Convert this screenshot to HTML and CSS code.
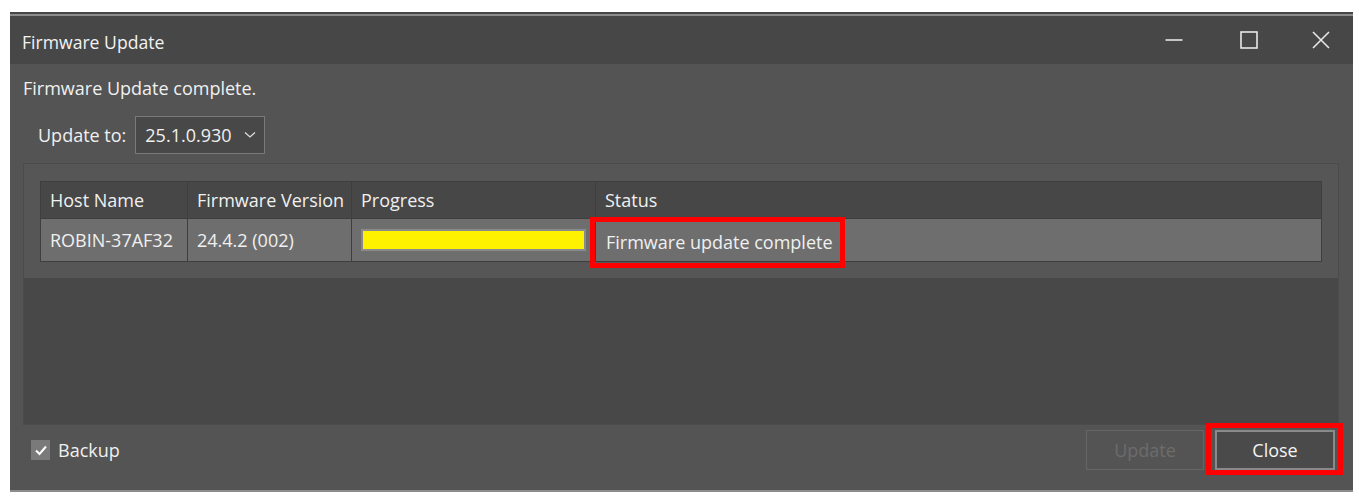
FILE: index.html
```html
<!DOCTYPE html>
<html>
<head>
<meta charset="utf-8">
<title>Firmware Update</title>
<link rel="stylesheet" href="styles.css">
</head>
<body>
<div class="window">
  <div class="behind"></div>
  <div class="edge"></div>
  <div class="titlebar">
    <span class="title">Firmware Update</span>
    <div class="caption">
      <span class="cbtn min"><svg width="18" height="18" viewBox="0 0 18 18"><path d="M0.5 9H17.5" stroke="#e8e8e8" stroke-width="1.6"/></svg></span>
      <span class="cbtn"><svg width="18" height="18" viewBox="0 0 18 18"><rect x="1" y="1" width="16" height="16" fill="none" stroke="#e8e8e8" stroke-width="1.6"/></svg></span>
      <span class="cbtn close"><svg width="18" height="18" viewBox="0 0 18 18"><path d="M1 1L17 17M17 1L1 17" stroke="#e8e8e8" stroke-width="1.6"/></svg></span>
    </div>
  </div>
  <div class="content">
    <div class="msg">Firmware Update complete.</div>
    <div class="update-row">
      <span class="label">Update to:</span>
      <div class="select"><span>25.1.0.930</span><svg width="12" height="8" viewBox="0 0 12 8"><path d="M1 1.5L6 6L11 1.5" fill="none" stroke="#dcdcdc" stroke-width="1.3"/></svg></div>
    </div>
    <div class="panel">
      <div class="panel-top">
        <div class="grid">
          <div class="row head">
            <div class="cell c1">Host Name</div>
            <div class="cell c2">Firmware Version</div>
            <div class="cell c3">Progress</div>
            <div class="cell c4">Status</div>
          </div>
          <div class="row data">
            <div class="cell c1">ROBIN-37AF32</div>
            <div class="cell c2">24.4.2 (002)</div>
            <div class="cell c3"><div class="bar"><div class="fill" style="width:100%"></div></div></div>
            <div class="cell c4"><span class="status">Firmware update complete</span></div>
          </div>
        </div>
      </div>
      <div class="panel-bottom"></div>
    </div>
    <div class="footer">
      <label class="check"><span class="box"><svg width="14" height="12" viewBox="0 0 14 12"><path d="M2 6.5L5.5 10L12 2.5" fill="none" stroke="#fff" stroke-width="2"/></svg></span>Backup</label>
      <div class="buttons">
        <button class="btn disabled">Update</button>
        <span class="hl"><button class="btn primary">Close</button></span>
      </div>
    </div>
  </div>
  <div class="bottom-edge"></div>
</div>
</body>
</html>
```
FILE: styles.css
```css
* { box-sizing: border-box; }
html, body { margin: 0; padding: 0; background: #ffffff; }
body {
  font-family: "Open Sans", "Noto Sans", sans-serif;
  font-size: 18px;
  color: #f0f0f0;
  width: 1359px;
  height: 504px;
  overflow: hidden;
}
.window {
  margin: 12px 0 0 10px;
  width: 1343px;
}
.behind { height: 2px; background: #464646; }
.edge { height: 2px; background: #8c8c8c; }
.titlebar {
  height: 48px;
  background: #474747;
  display: flex;
  align-items: center;
  padding-left: 12px;
}
.title { font-size: 17.6px; color: #f2f2f2; padding-top: 3px; }
.caption { margin-left: auto; display: flex; height: 100%; }
.cbtn { width: 72px; display: flex; align-items: center; justify-content: center; }
.cbtn.min { padding-right: 6px; }
.cbtn.close { width: 68px; padding-left: 4px; }
.content {
  background: #545454;
  height: 426px;
  padding: 0 14px 0 13px;
  display: flex;
  flex-direction: column;
}
.msg { height: 48px; padding-top: 12px; line-height: 24px; }
.update-row { display: flex; align-items: center; height: 46px; padding-left: 15px; }
.label { margin-right: 9px; }
.select {
  width: 130px;
  height: 38px;
  border: 1px solid #7a7a7a;
  background: #484848;
  display: flex;
  align-items: center;
  padding: 0 8px 0 9px;
}
.select svg { margin-left: auto; }
.panel {
  margin-top: 5px;
  height: 262px;
  flex: none;
  display: flex;
  flex-direction: column;
  border: 1px solid #4b4b4b;
}
.panel-top { height: 114px; background: #565656; padding: 17px 16px 0 16px; }
.panel-bottom { flex: 1; background: #484848; }
.grid { border: 1px solid #3e3e3e; }
.row { display: flex; }
.row.head { height: 37px; background: #474747; border-bottom: 1px solid #3e3e3e; }
.row.data { height: 42px; background: #6e6e6e; }
.cell {
  display: flex;
  align-items: center;
  padding-left: 9px;
  border-right: 1px solid #3e3e3e;
  white-space: nowrap;
}
.cell.c4 { border-right: none; flex: 1; }
.c1 { width: 147px; }
.c2 { width: 164px; }
.c3 { width: 244px; }
.bar {
  width: 225px;
  height: 22px;
  background: #8a8a8a;
  padding: 2px;
}
.fill { height: 100%; background: #fff200; }
.data .c4 { padding-left: 0; align-items: flex-start; }
.status {
  margin-left: -6px;
  margin-top: -2px;
  height: 51px;
  display: flex;
  align-items: center;
  padding: 0 7px 2px 11px;
  border: 5px solid #ff0000;
}
.footer {
  flex: 1;
  display: flex;
  align-items: flex-start;
  padding-left: 8px;
  padding-top: 5px;
}
.check { display: flex; align-items: center; height: 40px; }
.box {
  width: 19px; height: 20px;
  background: #7a7a7a;
  display: flex; align-items: center; justify-content: center;
  margin-right: 8px;
}
.buttons { margin-left: auto; display: flex; align-items: flex-start; margin-right: -4px; }
.btn {
  width: 118px;
  height: 40px;
  font-family: inherit;
  font-size: 18px;
  background: transparent;
  border: 1px solid #666666;
  color: #6c6c6c;
  padding: 0;
}
.btn.disabled { margin-right: 2px; }
.hl {
  border: 5px solid #ff0000;
  padding: 2px 3px 0 4px;
  margin-top: -7px;
  display: flex;
}
.btn.primary {
  width: 120px;
  background: #4a4a4a;
  border: 2px solid #8a8a8a;
  color: #f4f4f4;
}
.bottom-edge { height: 2px; background: #8c8c8c; }
```
